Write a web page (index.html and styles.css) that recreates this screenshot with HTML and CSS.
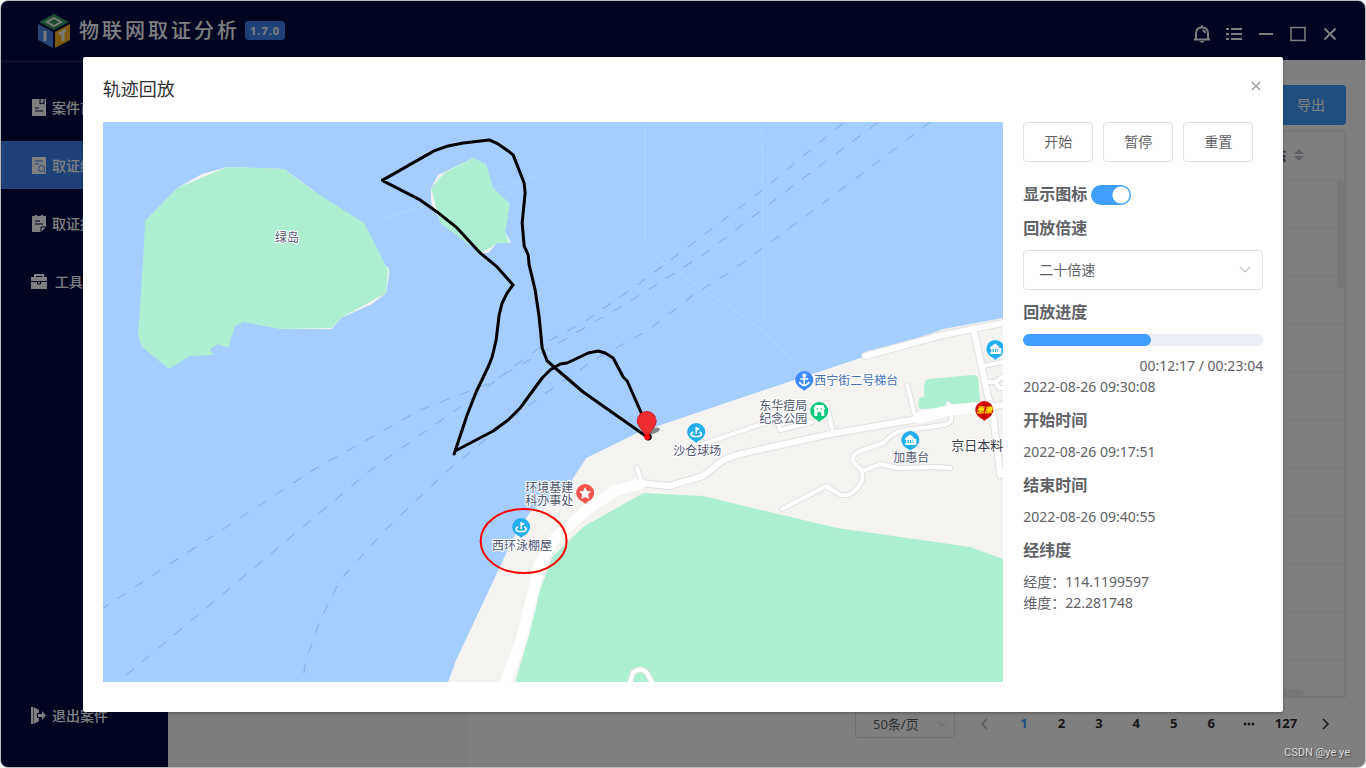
FILE: index.html
```html
<!DOCTYPE html>
<html lang="zh-CN">
<head>
  <meta charset="UTF-8">
  <meta name="viewport" content="width=device-width, initial-scale=1.0">
  <title>物联网取证分析</title>
  <link rel="stylesheet" href="styles.css">
</head>
<body>
  <div class="window">
    <header class="topbar">
      <svg class="logo" viewBox="0 0 32 34" width="32" height="34">
        <path d="M16 0L31 8L16 16L1 8Z" fill="#2a9a5c"/>
        <path d="M16 4L23 8L16 12L9 8Z" fill="none" stroke="#f4f4f4" stroke-width="2"/>
        <path d="M0 10L15 18V34L0 26Z" fill="#4788e8"/>
        <path d="M32 10L17 18V34L32 26Z" fill="#f6b51c"/>
        <path d="M7 17V27M21 20L28 16M25 18V27" fill="none" stroke="#f4f4f4" stroke-width="3"/>
      </svg>
      <h1>物联网取证分析</h1>
      <span class="version">1.7.0</span>
      <div class="window-tools">
        <button aria-label="通知">
          <svg viewBox="0 0 20 20" width="20" height="20" fill="none" stroke="currentColor" stroke-width="2">
            <path d="M4 15V9.500C4 5.500 6.500 3.500 10 3.500S16 5.500 16 9.500V15M2 15.500H18M10 1.500V3.500M10.500 6.500C12 6.500 13 7.500 13 9"/>
            <path d="M7 17H13L10 19Z" fill="currentColor" stroke="none"/>
          </svg>
        </button>
        <button aria-label="列表">
          <svg viewBox="0 0 20 20" width="20" height="20" fill="none" stroke="currentColor" stroke-width="2">
            <path d="M7 5H18M7 10H18M7 15H18M2 5H5M2 10H5M2 15H5"/>
          </svg>
        </button>
        <button aria-label="最小化">
          <svg viewBox="0 0 20 20" width="20" height="20" fill="none" stroke="currentColor" stroke-width="2"><path d="M3 10H17"/></svg>
        </button>
        <button aria-label="最大化">
          <svg viewBox="0 0 20 20" width="20" height="20" fill="none" stroke="currentColor" stroke-width="1.500"><path d="M3 3.500H17V16.500H3Z"/></svg>
        </button>
        <button aria-label="关闭">
          <svg viewBox="0 0 20 20" width="20" height="20" fill="none" stroke="currentColor" stroke-width="2"><path d="M4.500 4.500L15.500 15.500M15.500 4.500L4.500 15.500"/></svg>
        </button>
      </div>
    </header>

    <div class="layout">
      <nav class="sidebar">
        <a href="#">
          <svg viewBox="0 0 14 17" width="14" height="17"><path d="M0 0H14V17H0Z" fill="currentColor"/><path d="M8 0V5L10 4L12 5V0M3 9H7M3 12H11" fill="none" stroke="#020842"/></svg>
          案件首页
        </a>
        <a href="#" class="active">
          <svg viewBox="0 0 14 17" width="14" height="17"><path d="M0 0H14V17H0Z" fill="currentColor"/><path d="M3 4H11M3 7H7M12 14L14 16" fill="none" stroke="#3e82f2"/><circle cx="9.500" cy="11.500" r="3" fill="none" stroke="#3e82f2"/></svg>
          取证结果
        </a>
        <a href="#">
          <svg viewBox="0 0 14 17" width="14" height="17"><path d="M0 1H3V0H5V1H9V0H11V1H14V12L9 17H0Z" fill="currentColor"/><path d="M3 6H8M3 9H11M9 17V12H14" fill="none" stroke="#020842"/></svg>
          取证报告
        </a>
        <a href="#" class="tools">
          <svg viewBox="0 0 16 15" width="16" height="15"><path d="M3 3V0H13V3H16V15H0V3ZM5 3H11V2H5Z" fill="currentColor"/><path d="M0 7.500H16M6.500 7V10H9.500V7" fill="none" stroke="#020842"/></svg>
          工具箱
        </a>
        <a href="#" class="exit">
          <svg viewBox="0 0 15 17" width="15" height="17" fill="currentColor"><path d="M0 0H2V17H0ZM2.500 0L8 3V6H6V11H8V14L2.500 17ZM7 7H11V4L15 8.500L11 13V10H7Z"/></svg>
          退出案件
        </a>
      </nav>
      <aside class="tree"></aside>
      <main class="content">
        <div class="actions">
          <button class="export">导出</button>
        </div>
        <div class="table-box">
          <table>
            <thead>
              <tr>
                <th>状态
                  <svg viewBox="0 0 10 12" width="10" height="12" fill="#c0c4cc"><path d="M0 5L5 0L10 5ZM0 7L5 12L10 7Z"/></svg>
                </th>
              </tr>
            </thead>
            <tbody>
              <tr><td></td></tr>
              <tr><td></td></tr>
              <tr><td></td></tr>
              <tr><td></td></tr>
              <tr><td></td></tr>
              <tr><td></td></tr>
              <tr><td></td></tr>
              <tr><td></td></tr>
              <tr><td></td></tr>
              <tr><td></td></tr>
            </tbody>
          </table>
          <span class="scroll-y"></span>
          <span class="scroll-x"></span>
        </div>
        <div class="pagination">
          <div class="select page-size">
            <select aria-label="每页条数">
              <option>50条/页</option>
            </select>
            <svg viewBox="0 0 12 8" width="10" height="8" fill="none" stroke="#c0c4cc"><path d="M1 1L6 6L11 1"/></svg>
          </div>
          <button class="prev" aria-label="上一页"><svg viewBox="0 0 8 12" width="8" height="12" fill="none" stroke="currentColor" stroke-width="1.500"><path d="M7 1L2 6L7 11"/></svg></button>
          <ul>
            <li><button class="current">1</button></li>
            <li><button>2</button></li>
            <li><button>3</button></li>
            <li><button>4</button></li>
            <li><button>5</button></li>
            <li><button>6</button></li>
            <li><button aria-label="更多"><svg viewBox="0 0 12 4" width="12" height="4" fill="currentColor"><circle cx="2" cy="2" r="1.500"/><circle cx="6" cy="2" r="1.500"/><circle cx="10" cy="2" r="1.500"/></svg></button></li>
            <li><button>127</button></li>
          </ul>
          <button aria-label="下一页"><svg viewBox="0 0 8 12" width="8" height="12" fill="none" stroke="currentColor" stroke-width="1.500"><path d="M1 1L6 6L1 11"/></svg></button>
        </div>
      </main>
    </div>

    <div class="overlay">
      <section class="dialog" role="dialog" aria-labelledby="dialogTitle">
        <div class="dialog-header">
          <h2 id="dialogTitle">轨迹回放</h2>
          <button class="close" aria-label="关闭"><svg viewBox="0 0 10 10" width="10" height="10" fill="none" stroke="currentColor" stroke-width="1.200"><path d="M1 1L9 9M9 1L1 9"/></svg></button>
        </div>
        <div class="dialog-body">
          <svg class="map" viewBox="103 122 900 560" preserveAspectRatio="xMidYMid slice">
            <defs>
              <g id="pin">
                <path d="M-9 0A9 9 0 1 1 9 0C9 4 5 8 2 9L0 11L-2 9C-5 8 -9 4 -9 0Z"/>
              </g>
              <g id="flag" fill="none" stroke="#fff" stroke-width="1.500">
                <path d="M-3 0C-6 1 -6 4 -2 4.500H2C6 4 6 1 3 0M0 2V-5"/>
                <path d="M0 -5L4 -3L0 -1Z" fill="#fff" stroke="none"/>
              </g>
              <g id="house" fill="#fff">
                <path d="M-5 -2L0 -5.500L4 -2V0H-5ZM-4 0H-2.800V3H-4ZM-1.500 0H-.300V3H-1.500ZM1 0H2.200V3H1ZM-5 3H6V5H-5ZM3 -1H6V3H3Z"/>
              </g>
            </defs>

            <!-- coast and parks -->
            <path class="land" d="M448 682L456 660L489 590L513 538L530 512L570 483L586 458L637 433L770 388L863 357L943 329L1003 318V682Z"/>
            <path class="land" d="M177 188L202 174L227 167L284 169L314 191L389 269V275L386 293L372 304L341 318L332 329H280Z"/>
            <path class="land" d="M431 188L438 175L473 158L505 232L511 243L497 243L488 253H480L437 215L431 203Z"/>
            <g class="park">
              <path d="M177 188L227 167L284 169L312 190L364 223L388 270L386 293L341 318L332 328L280 329L244 322L235 326L228 348L218 344L210 349L213 355L190 356L169 369L142 347L138 335L143 263L145 221Z"/>
              <path d="M473 158L486 164L493 188L510 204L505 232L509 243H497L490 248L480 253L440 223L431 188L444 173Z"/>
              <path d="M515 682L529 635L540 590L552 557L583 527L643 493L703 496L740 505L837 528L970 547L1003 559V682Z"/>
              <path d="M924 397V385Q924 380 929 379L972 375Q978 375 978 380L980 405L923 409Q917 409 918 404L919 398Z"/>
            </g>

            <!-- sea routes -->
            <g class="border-line">
              <path d="M103 270H143M364 223L431 205M493 188L536 177L763 330L802 372M645 122V240M762 122L763 326"/>
            </g>
            <g class="ferry">
              <path d="M843 123L760 192L697 240L637 285L587 320L547 342L493 382L420 410L313 470L103 608"/>
              <path d="M877 123L790 188L707 252L653 287L620 307L567 338L503 375L463 405L373 468L118 682"/>
              <path d="M930 122L830 198L730 272L693 295L647 331L597 358L543 395L513 417L448 470L385 530L340 580L320 620L306 660L302 682"/>
            </g>

            <!-- roads, casing first -->
            <g class="road casing">
              <path d="M637 468L641 482M700 445L767 422L777 422L780 430L812 422M826 403L833 434M907 385L915 417M948 404L951 418Q952 423 943 425L900 431Q890 435 883 443L857 452Q849 458 855 464L862 471V480Q858 490 848 495H840L826 486L782 509M862 471L880 464L897 468L937 467L950 468M983 366L1003 362M988 382H995L1003 376M995 382L999 388H1003M630 682L633 672Q640 667 646 672L652 682"/>
              <path class="wide" d="M640 483L668 486L703 476L723 460L740 454L830 434L917 419L950 411L1003 405M865 356L943 335L1003 323M973 328L980 360L987 393L993 417L1000 475"/>
            </g>
            <g class="road">
              <path d="M637 468L641 482M700 445L767 422L777 422L780 430L812 422M826 403L833 434M907 385L915 417M948 404L951 418Q952 423 943 425L900 431Q890 435 883 443L857 452Q849 458 855 464L862 471V480Q858 490 848 495H840L826 486L782 509M862 471L880 464L897 468L937 467L950 468M983 366L1003 362M988 382H995L1003 376M995 382L999 388H1003M630 682L633 672Q640 667 646 672L652 682"/>
              <path class="wide" d="M640 483L668 486L703 476L723 460L740 454L830 434L917 419L950 411L1003 405M865 356L943 335L1003 323M973 328L980 360L987 393L993 417L1000 475"/>
              <path class="main" d="M504 686L521 640L531 600L540 562L556 537L590 507L617 490L640 484"/>
              <path class="main" d="M918 418L950 410L985 407"/>
            </g>

            <!-- places -->
            <use href="#pin" x="696" y="432" fill="#23aef0"/>
            <use href="#flag" x="696" y="432"/>
            <use href="#pin" x="521" y="527" fill="#23aef0"/>
            <use href="#flag" x="521" y="527"/>
            <use href="#pin" x="910" y="440" fill="#23aef0"/>
            <use href="#house" x="910" y="440"/>
            <use href="#pin" x="995" y="349" fill="#23aef0"/>
            <use href="#house" x="995" y="349"/>
            <use href="#pin" x="585" y="493" fill="#f6534f"/>
            <path d="M585 487L587 491L591 491.500L588 494.500L589 499L585 497L581 499L582 494.500L579 491.500L583 491Z" fill="#fff"/>
            <use href="#pin" x="804" y="380" fill="#3d8bff"/>
            <path d="M804 377V386M800 379H808M799 382Q804 389 809 382" fill="none" stroke="#fff" stroke-width="1.500"/>
            <circle cx="804" cy="375.500" r="2" fill="#fff"/>
            <use href="#pin" x="819" y="411" fill="#0bc97c"/>
            <path d="M815 405H823L825 409H824V416H821V413Q819 410 817 413V416H814V409H813Z" fill="#fff"/>
            <path d="M817 408V410M821 408V410" stroke="#0bc97c"/>
            <g class="sign">
              <use href="#pin" x="984" y="410" fill="#d00000"/>
              <text x="984" y="413" text-anchor="middle">惠康</text>
            </g>
            <g class="place">
              <text x="275" y="242">绿岛</text>
              <text x="673" y="455">沙仓球场</text>
              <text><tspan x="525" y="492">环境基建</tspan><tspan x="525" y="505">科办事处</tspan></text>
              <text x="492" y="550">西环泳棚屋</text>
              <text><tspan x="759" y="410">东华痘局</tspan><tspan x="759" y="423">纪念公园</tspan></text>
              <text x="893" y="462">加惠台</text>
              <text class="pier" x="814" y="385">西宁街二号梯台</text>
              <text class="shop" x="951" y="450">京日本料</text>
            </g>

            <path class="track" d="M647 437L610 411L583 392L555 368L547 361L542 348L539 317L535 290L529 265L528 255L524 246L522 223L525 193L524 183L513 155L508 151L498 144L489 140L463 143L448 146L434 151L383 180L381 180M383 181L420 200L437 212L457 228L480 253L497 267L513 285L507 293L502 303L499 315L496 340L492 357L488 367L476 392L467 415L454 454L455 451L493 431L508 420L520 408L542 378L550 370L560 364L567 363L588 353L598 351L605 353L613 358L623 377L627 381L642 415L650 437"/>
            <ellipse cx="652" cy="431" rx="8" ry="3" fill="#888" transform="rotate(-15 652 431)"/>
            <circle cx="648" cy="437" r="3.500"/>
            <path d="M637 421A9.500 9.500 0 1 1 656 421C656 427 650 430 647 438C644 430 637 427 637 421Z" fill="#ee2d30" stroke="#c8252a"/>
            <circle cx="647" cy="437" r="3" fill="#f00"/>
            <ellipse cx="523.500" cy="541" rx="43" ry="32" fill="none" stroke="#f00" stroke-width="2"/>
          </svg>

          <div class="controls">
            <div class="buttons">
              <button>开始</button>
              <button>暂停</button>
              <button>重置</button>
            </div>
            <div class="switch-row">
              <label for="showIcon">显示图标</label>
              <input type="checkbox" id="showIcon" checked>
            </div>
            <label class="heading" for="speed">回放倍速</label>
            <div class="select">
              <select id="speed">
                <option>二十倍速</option>
              </select>
              <svg viewBox="0 0 12 8" width="12" height="8" fill="none" stroke="#c0c4cc" stroke-width="1.200"><path d="M1 1L6 6L11 1"/></svg>
            </div>
            <h3 class="heading">回放进度</h3>
            <div class="progress" role="progressbar" aria-label="回放进度" aria-valuenow="53">
              <div class="bar" style="width: 53.3%"></div>
            </div>
            <div class="times">
              <p class="elapsed">00:12:17 / 00:23:04</p>
              <p>2022-08-26 09:30:08</p>
              <h3 class="heading">开始时间</h3>
              <p>2022-08-26 09:17:51</p>
              <h3 class="heading">结束时间</h3>
              <p>2022-08-26 09:40:55</p>
              <h3 class="heading">经纬度</h3>
              <p>经度：114.1199597</p>
              <p>维度：22.281748</p>
            </div>
          </div>
        </div>
      </section>
    </div>
    <span class="watermark">CSDN @ye ye</span>
  </div>
</body>
</html>
```
FILE: styles.css
```css
* {
  box-sizing: border-box;
}

body {
  margin: 0;
  background-color: #fff;
  color: #606266;
  font-family: 'Noto Sans', 'Noto Sans CJK SC', sans-serif;
  font-size: 14px;
  line-height: 21px;
}

h1, h2, h3, p, ul {
  margin: 0;
  padding: 0;
}

button, select {
  font-family: inherit;
  color: inherit;
  cursor: pointer;
}

button {
  padding: 0;
  border: none;
  background: none;
}

.window {
  position: relative;
  display: flex;
  flex-direction: column;
  min-height: 100vh;
  border: 1px solid #b8bcb8;
  border-radius: 8px;
  overflow: hidden;
}

/* top bar */
.topbar {
  display: flex;
  align-items: center;
  height: 59px;
  padding: 0 25px 0 37px;
  background-color: #020842;
  color: #fff;
}

.topbar h1 {
  margin: 0 5px 0 9px;
  font-size: 20px;
  font-weight: 500;
  letter-spacing: 3px;
}

.version {
  padding: 0 5px;
  border-radius: 4px;
  background-color: #3e82f2;
  font-size: 11px;
  font-weight: bold;
  line-height: 19px;
  letter-spacing: 1px;
}

.window-tools {
  display: flex;
  gap: 12px;
  margin-left: auto;
  padding-top: 6px;
}

.window-tools button {
  height: 20px;
}

/* page */
.layout {
  display: flex;
  flex: 1;
}

.sidebar {
  display: flex;
  flex-direction: column;
  gap: 10px;
  width: 167px;
  padding: 20px 0 28px;
  border-top: 3px solid #181d50;
  background-color: #020842;
}

.sidebar a {
  display: flex;
  align-items: center;
  gap: 6px;
  height: 48px;
  padding-left: 31px;
  color: #fff;
  font-weight: 500;
  text-decoration: none;
}

.sidebar .active {
  background-color: #3e82f2;
}

.sidebar .tools {
  gap: 8px;
  padding-left: 30px;
}

.sidebar .exit {
  margin-top: auto;
  padding-left: 30px;
}

.tree {
  width: 300px;
  background-color: #f8f8f8;
}

.content {
  display: flex;
  flex: 1;
  flex-direction: column;
  padding: 25px 19px 29px 20px;
}

.actions {
  display: flex;
  justify-content: flex-end;
  margin-bottom: 5px;
}

.export {
  width: 70px;
  height: 40px;
  padding-bottom: 2px;
  border-radius: 4px;
  background-color: #409eff;
  color: #fff;
  font-size: 14px;
}

.table-box {
  position: relative;
  flex: 1;
  border: 2px solid #ebeef5;
  margin-bottom: 12px;
}

table {
  width: 100%;
  border-collapse: collapse;
}

th {
  height: 47px;
  padding: 0 40px 0 0;
  border-bottom: 1px solid #ebeef5;
  text-align: right;
}

th svg {
  margin-left: 4px;
}

td {
  height: 48px;
  border-bottom: 1px solid #ebeef5;
}

.scroll-y, .scroll-x {
  position: absolute;
  border-radius: 4px;
  background-color: #eee;
}

.scroll-y {
  top: 48px;
  right: 0;
  width: 7px;
  height: 108px;
}

.scroll-x {
  right: 40px;
  bottom: 0;
  width: 400px;
  height: 7px;
}

.pagination {
  display: flex;
  align-items: center;
  justify-content: flex-end;
  gap: 10px;
  padding-right: 5px;
  color: #303133;
}

.pagination button {
  width: 30px;
  height: 28px;
  padding-bottom: 2px;
  font-size: 13px;
  font-weight: bold;
}

.pagination ul {
  display: flex;
  justify-content: space-between;
  width: 292px;
  list-style: none;
}

.pagination .prev {
  color: #b0b3ba;
}

.pagination .current {
  color: #409eff;
}

.pagination svg {
  vertical-align: middle;
}

/* dialog */
.overlay {
  position: absolute;
  inset: 0;
  display: flex;
  align-items: center;
  justify-content: center;
  background-color: rgba(0, 0, 0, 0.5);
}

.dialog {
  width: 88%;
  min-width: 1200px;
  border-radius: 2px;
  background-color: #fff;
  box-shadow: 0 1px 3px rgba(0, 0, 0, 0.3);
}

.dialog-header {
  display: flex;
  justify-content: space-between;
  padding: 20px 19px 21px 20px;
}

.dialog-header h2 {
  color: #303133;
  font-size: 18px;
  font-weight: normal;
  line-height: 24px;
}

.close {
  width: 16px;
  height: 16px;
  color: #909399;
}

.dialog-body {
  display: flex;
  gap: 20px;
  padding: 0 20px 30px;
}

.controls {
  width: 240px;
}

.buttons {
  display: flex;
  gap: 10px;
}

.buttons button {
  width: 70px;
  height: 40px;
  padding-bottom: 2px;
  border: 1px solid #dcdfe6;
  border-radius: 4px;
  font-size: 14px;
}

.switch-row {
  display: flex;
  align-items: center;
  gap: 4px;
  height: 22px;
  margin: 22px 0 11px;
  font-size: 16px;
  font-weight: bold;
}

.switch-row input {
  appearance: none;
  width: 40px;
  height: 20px;
  margin: 0;
  border-radius: 10px;
  background: radial-gradient(circle at 30px 10px, #fff 8px, #409eff 9px);
}

.heading {
  display: block;
  margin: 11px 0;
  font-size: 16px;
  font-weight: bold;
  line-height: 22px;
}

.select {
  position: relative;
}

.select select {
  appearance: none;
  display: block;
  width: 100%;
  height: 40px;
  padding: 0 15px;
  border: 1px solid #dcdfe6;
  border-radius: 4px;
  background-color: transparent;
  font-size: 14px;
}

.select svg {
  position: absolute;
  top: 50%;
  right: 12px;
  margin-top: -4px;
}

.pagination .page-size {
  width: 100px;
  margin-right: 4px;
}

.page-size select {
  height: 28px;
  padding: 0 17px;
  color: #606266;
  font-size: 13px;
}

.page-size svg {
  right: 8px;
}

.progress {
  height: 12px;
  margin-bottom: 9px;
  border-radius: 6px;
  background-color: #ebeef5;
}

.bar {
  height: 12px;
  border-radius: 6px;
  background-color: #409eff;
}

.times .heading {
  margin: 12px 0 10px;
}

.elapsed {
  text-align: right;
}

/* map */
.map {
  display: block;
  flex: 1;
  min-width: 0;
  height: 560px;
  background-color: #a3ceff;
}

.land {
  fill: #f4f3f0;
}

.park {
  fill: #adf0d1;
}

.border-line {
  fill: none;
  stroke: #aed5fc;
}

.ferry {
  fill: none;
  stroke: #80afe4;
  stroke-dasharray: 10 11;
}

.road {
  fill: none;
  stroke: #fff;
  stroke-width: 4px;
  stroke-linecap: round;
  stroke-linejoin: round;
}

.road .wide {
  stroke-width: 6px;
}

.road .main {
  stroke-width: 11px;
}

.casing {
  stroke: #e0e0e4;
  stroke-width: 6px;
}

.casing .wide {
  stroke-width: 8px;
}

.place {
  fill: #4d5670;
  stroke: #fff;
  stroke-width: 2px;
  stroke-linejoin: round;
  paint-order: stroke;
  font-size: 12px;
}

.place .pier {
  fill: #4470b4;
}

.place .shop {
  fill: #333842;
  font-size: 13px;
}

.sign text {
  fill: #ffea00;
  font-size: 8px;
  font-weight: bold;
  font-style: italic;
}

.track {
  fill: none;
  stroke: #000;
  stroke-width: 3px;
  stroke-linejoin: round;
}

.watermark {
  position: absolute;
  right: 15px;
  bottom: 4px;
  color: #d8d8d8;
  font-family: Roboto, sans-serif;
  font-size: 11px;
  text-shadow: 1px 1px 1px #444;
}
```
